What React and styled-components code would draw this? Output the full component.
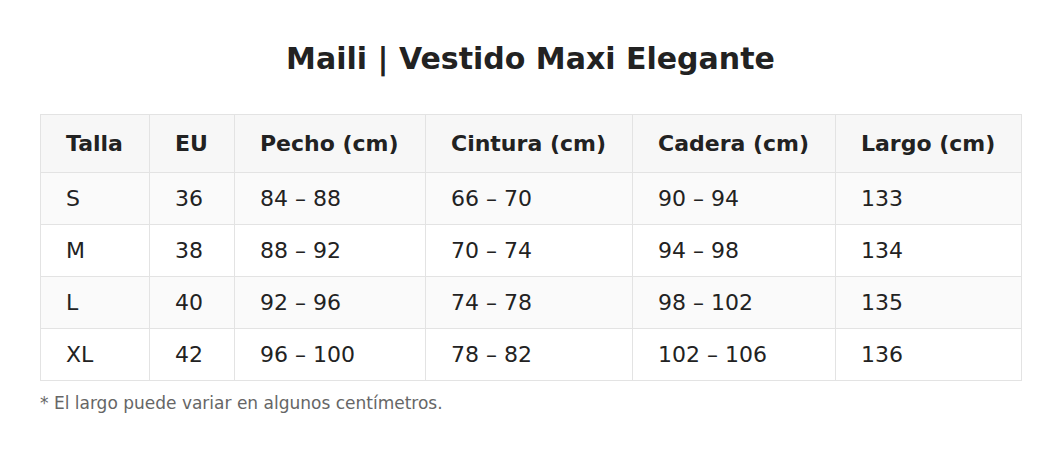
import React from "react";
import styled, { createGlobalStyle } from "styled-components";

const Global = createGlobalStyle`
  html, body { margin: 0; padding: 0; background: #fff; }
  body { font-family: "DejaVu Sans", Verdana, sans-serif; color: #222; }
`;

const Page = styled.div`
  padding: 41px 40px 20px;
`;

const Title = styled.h1`
  margin: 0 0 37px;
  text-align: center;
  font-size: 30px;
  line-height: 36px;
  font-weight: bold;
  color: #222;
`;

const Table = styled.table`
  width: 981px;
  border-collapse: collapse;
  table-layout: fixed;
  font-size: 22px;
`;

const HeadCell = styled.th`
  height: 57px;
  padding: 0 0 0 25px;
  text-align: left;
  font-weight: bold;
  background: #f7f7f7;
  border: 1px solid #e3e3e3;
  color: #222;
`;

const Row = styled.tr`
  background: ${(p) => (p.$striped ? "#fafafa" : "#fff")};
`;

const Cell = styled.td`
  height: 51px;
  padding: 0 0 0 25px;
  border: 1px solid #e3e3e3;
  color: #222;
`;

const Note = styled.p`
  margin: 12px 0 0;
  font-size: 17px;
  color: #666;
`;

const widths = [109, 85, 191, 207, 203, 186];
const headers = ["Talla", "EU", "Pecho (cm)", "Cintura (cm)", "Cadera (cm)", "Largo (cm)"];
const rows = [
  ["S", "36", "84 – 88", "66 – 70", "90 – 94", "133"],
  ["M", "38", "88 – 92", "70 – 74", "94 – 98", "134"],
  ["L", "40", "92 – 96", "74 – 78", "98 – 102", "135"],
  ["XL", "42", "96 – 100", "78 – 82", "102 – 106", "136"],
];

export default function App() {
  return (
    <Page>
      <Global />
      <Title>Maili | Vestido Maxi Elegante</Title>
      <Table>
        <colgroup>
          {widths.map((w, i) => (
            <col key={i} style={{ width: w }} />
          ))}
        </colgroup>
        <thead>
          <tr>
            {headers.map((h) => (
              <HeadCell key={h}>{h}</HeadCell>
            ))}
          </tr>
        </thead>
        <tbody>
          {rows.map((r, i) => (
            <Row key={r[0]} $striped={i % 2 === 0}>
              {r.map((c, j) => (
                <Cell key={j}>{c}</Cell>
              ))}
            </Row>
          ))}
        </tbody>
      </Table>
      <Note>* El largo puede variar en algunos centímetros.</Note>
    </Page>
  );
}
